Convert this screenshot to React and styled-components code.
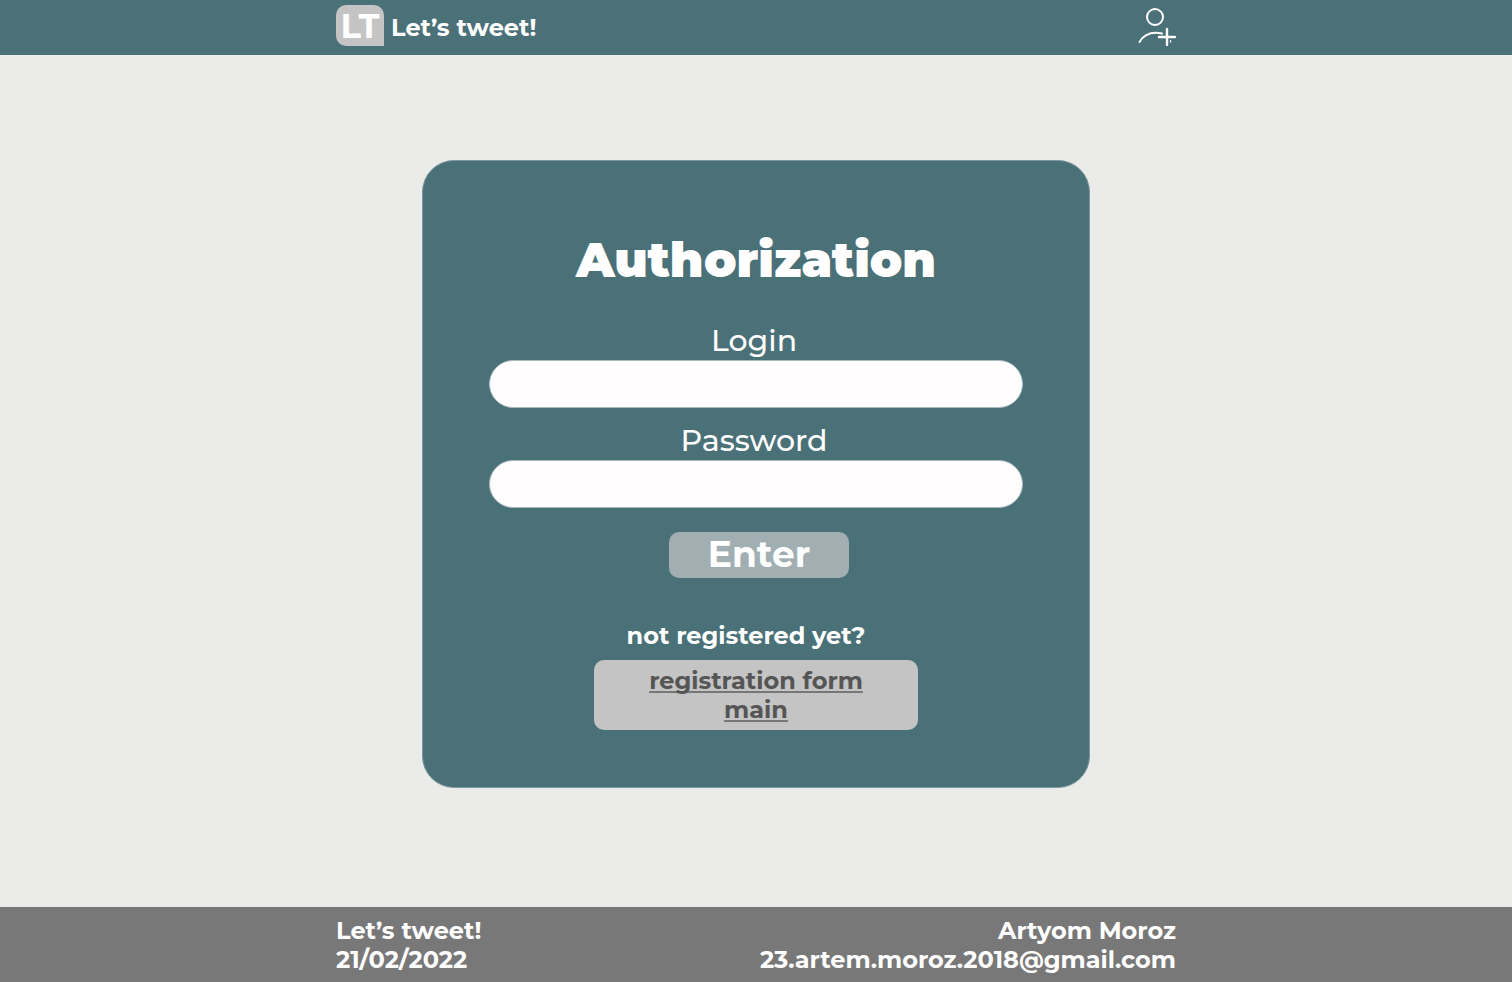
import React from "react";
import styled, { createGlobalStyle } from "styled-components";

const GlobalStyle = createGlobalStyle`
  *, *::before, *::after { box-sizing: border-box; }
  body {
    margin: 0;
    background: #ebebe9;
    color: #ffffff;
    font-family: Montserrat, Inter, "Liberation Sans", sans-serif;
    font-size: 24px;
    font-weight: 700;
    line-height: 29px;
  }
`;

const Page = styled.div`
  min-height: 100vh;
  display: flex;
  flex-direction: column;
`;

const Container = styled.div`
  width: 100%;
  max-width: 840px;
  margin: 0 auto;
  display: flex;
  justify-content: space-between;
  align-items: center;
`;

const Header = styled.header`
  background: #4a7078;
  padding: 5px 0 9px;
`;

const Brand = styled.a`
  display: flex;
  align-items: center;
  gap: 7px;
  color: inherit;
  text-decoration: none;
`;

const Logo = styled.span`
  width: 48px;
  height: 41px;
  border-radius: 10px 10px 0 10px;
  background: #c4c4c4;
  font-size: 34px;
  font-weight: 700;
  line-height: 42px;
  text-align: center;
`;

const BrandName = styled.span`
  padding-top: 4px;
`;

const IconLink = styled.a`
  display: flex;
  color: inherit;
`;

const Main = styled.main`
  flex: 1;
  padding: 105px 16px 104px;
`;

const Card = styled.form`
  max-width: 668px;
  min-height: 628px;
  margin: 0 auto;
  padding: 69px 66px 57px;
  border: 1px solid #7c989d;
  border-radius: 32px;
  background: #4a7078;
  display: flex;
  flex-direction: column;
  align-items: center;
`;

const Title = styled.h1`
  margin: 0 0 33px;
  font-size: 48px;
  font-weight: 900;
  line-height: 60px;
`;

const Field = styled.div`
  width: 100%;
  margin-bottom: 15px;
  display: flex;
  flex-direction: column;
  align-items: center;
`;

const Label = styled.label`
  padding: 0 4px 1px 0;
  font-size: 30px;
  font-weight: 500;
  line-height: 36px;
`;

const Input = styled.input`
  width: 100%;
  height: 48px;
  padding: 0 24px;
  border: 1px solid #a9bbbe;
  border-radius: 24px;
  background: #fffdfe;
  color: #333333;
  font: inherit;
`;

const Submit = styled.button`
  width: 180px;
  height: 46px;
  margin: 9px 0 43px 6px;
  padding: 0 0 2px;
  border: 0;
  border-radius: 10px;
  background: #a1afb2;
  color: inherit;
  font: inherit;
  font-size: 36px;
  font-weight: 700;
  line-height: 44px;
  cursor: pointer;
`;

const Prompt = styled.p`
  margin: 0;
  padding-right: 20px;
`;

const Links = styled.nav`
  width: 324px;
  margin-top: 10px;
  padding: 6px 0;
  border-radius: 10px;
  background: #c4c4c4;
  display: flex;
  flex-direction: column;
  align-items: center;
`;

const TextLink = styled.a`
  color: #555555;
  text-decoration: underline;
  text-decoration-color: #777777;
  text-decoration-thickness: 2px;
  text-decoration-skip-ink: none;
  text-underline-offset: 2px;
`;

const Footer = styled.footer`
  background: #787878;
  padding: 9px 0 8px;
`;

const FooterColumn = styled.div`
  display: flex;
  flex-direction: column;
  align-items: ${({ $align }) => $align};
`;

const FooterLink = styled.a`
  color: inherit;
  text-decoration: none;
`;

function AddUserIcon() {
  return (
    <svg width="40" height="41" viewBox="0 0 40 41" fill="none" stroke="currentColor" strokeWidth="2" aria-hidden="true">
      <circle cx="19" cy="12" r="8" />
      <path d="M3.500 37C8 29.500 16 26.500 26 28.500" strokeLinecap="round" />
      <path d="M31 24V40M23 32H39" strokeWidth="2.400" strokeLinecap="round" />
      <path d="M34.500 35V37.500" strokeWidth="1.300" />
    </svg>
  );
}

export default function App() {
  return (
    <>
      <GlobalStyle />
      <Page>
        <Header>
          <Container>
            <Brand href="#home">
              <Logo>LT</Logo>
              <BrandName>Let’s tweet!</BrandName>
            </Brand>
            <IconLink href="#register" aria-label="Register">
              <AddUserIcon />
            </IconLink>
          </Container>
        </Header>
        <Main>
          <Card onSubmit={(event) => event.preventDefault()}>
            <Title>Authorization</Title>
            <Field>
              <Label htmlFor="login">Login</Label>
              <Input id="login" type="text" autoComplete="username" />
            </Field>
            <Field>
              <Label htmlFor="password">Password</Label>
              <Input id="password" type="password" autoComplete="current-password" />
            </Field>
            <Submit type="submit">Enter</Submit>
            <Prompt>not registered yet?</Prompt>
            <Links>
              <TextLink href="#register">registration form</TextLink>
              <TextLink href="#main">main</TextLink>
            </Links>
          </Card>
        </Main>
        <Footer>
          <Container>
            <FooterColumn $align="flex-start">
              <span>Let’s tweet!</span>
              <time dateTime="2022-02-21">21/02/2022</time>
            </FooterColumn>
            <FooterColumn $align="flex-end">
              <span>Artyom Moroz</span>
              <FooterLink href="mailto:23.artem.moroz.2018@gmail.com">23.artem.moroz.2018@gmail.com</FooterLink>
            </FooterColumn>
          </Container>
        </Footer>
      </Page>
    </>
  );
}
